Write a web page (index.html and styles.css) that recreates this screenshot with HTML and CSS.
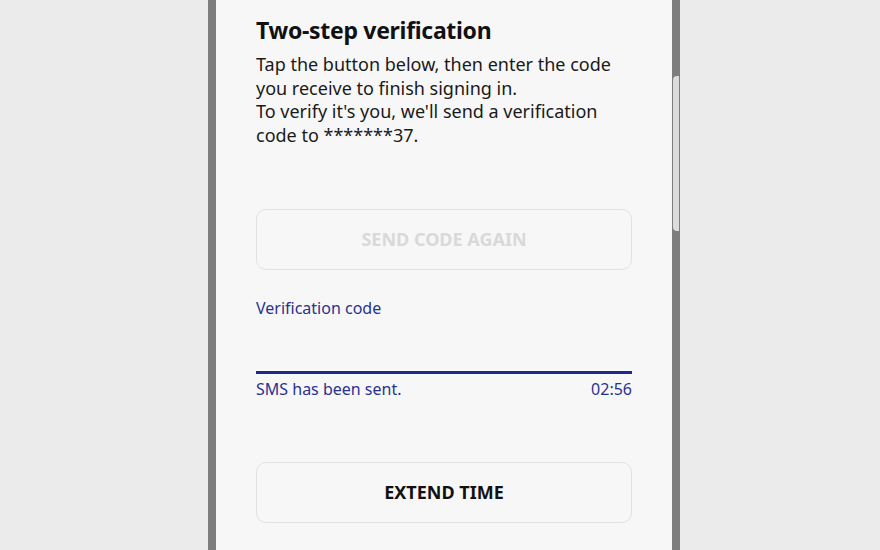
FILE: index.html
```html
<!DOCTYPE html>
<html>
<head>
<meta charset="utf-8">
<link rel="stylesheet" href="styles.css">
</head>
<body>
<div class="stage">
  <div class="phone">
    <div class="screen">
      <h1 class="title">Two-step verification</h1>
      <p class="desc">Tap the button below, then enter the code you receive to finish signing in.<br>To verify it's you, we'll send a verification code to *******37.</p>
      <button class="btn btn-disabled">SEND CODE AGAIN</button>
      <div class="field">
        <div class="label">Verification code</div>
        <div class="input"></div>
        <div class="helper"><span>SMS has been sent.</span><span>02:56</span></div>
      </div>
      <button class="btn btn-main">EXTEND TIME</button>
    </div>
    <div class="side-key"></div>
  </div>
</div>
</body>
</html>
```

FILE: styles.css
```css
html, body {
  margin: 0;
  padding: 0;
  height: 100%;
  overflow: hidden;
}
body {
  background: #ebebeb;
  font-family: "Noto Sans", "Open Sans", sans-serif;
}
.stage {
  display: flex;
  justify-content: flex-start;
  padding-left: 208px;
  height: 550px;
}
.phone {
  position: relative;
  width: 456px;
  height: 550px;
  border-left: 8px solid #7d7d7d;
  border-right: 8px solid #7d7d7d;
  background: #f7f7f7;
}
.screen {
  padding: 0 40px;
  display: flex;
  flex-direction: column;
}
.title {
  margin: 14px 0 0;
  font-size: 23px;
  font-weight: 700;
  line-height: 32px;
  color: #111;
  letter-spacing: -0.3px;
}
.desc {
  margin: 7px 0 0;
  font-size: 18px;
  line-height: 23.7px;
  color: #1a1a1a;
}
.btn {
  box-sizing: border-box;
  width: 376px;
  height: 61px;
  border: 1px solid #e2e2e2;
  border-radius: 10px;
  background: #f7f7f7;
  font-family: inherit;
  font-weight: 700;
  font-size: 18px;
  padding: 0;
}
.btn-disabled {
  margin-top: 61px;
  color: #d9d9d9;
}
.field {
  margin-top: 26px;
}
.label {
  font-size: 16px;
  line-height: 24px;
  color: #28338f;
}
.input {
  height: 51px;
  border-bottom: 3px solid #1f2a8c;
}
.helper {
  display: flex;
  justify-content: space-between;
  font-size: 16px;
  line-height: 30px;
  color: #28338f;
}
.btn-main {
  margin-top: 58px;
  color: #111;
}
.side-key {
  position: absolute;
  right: -7px;
  top: 76px;
  width: 6px;
  height: 155px;
  background: #dcdcdc;
  border-radius: 4px 0 0 4px;
}
```
